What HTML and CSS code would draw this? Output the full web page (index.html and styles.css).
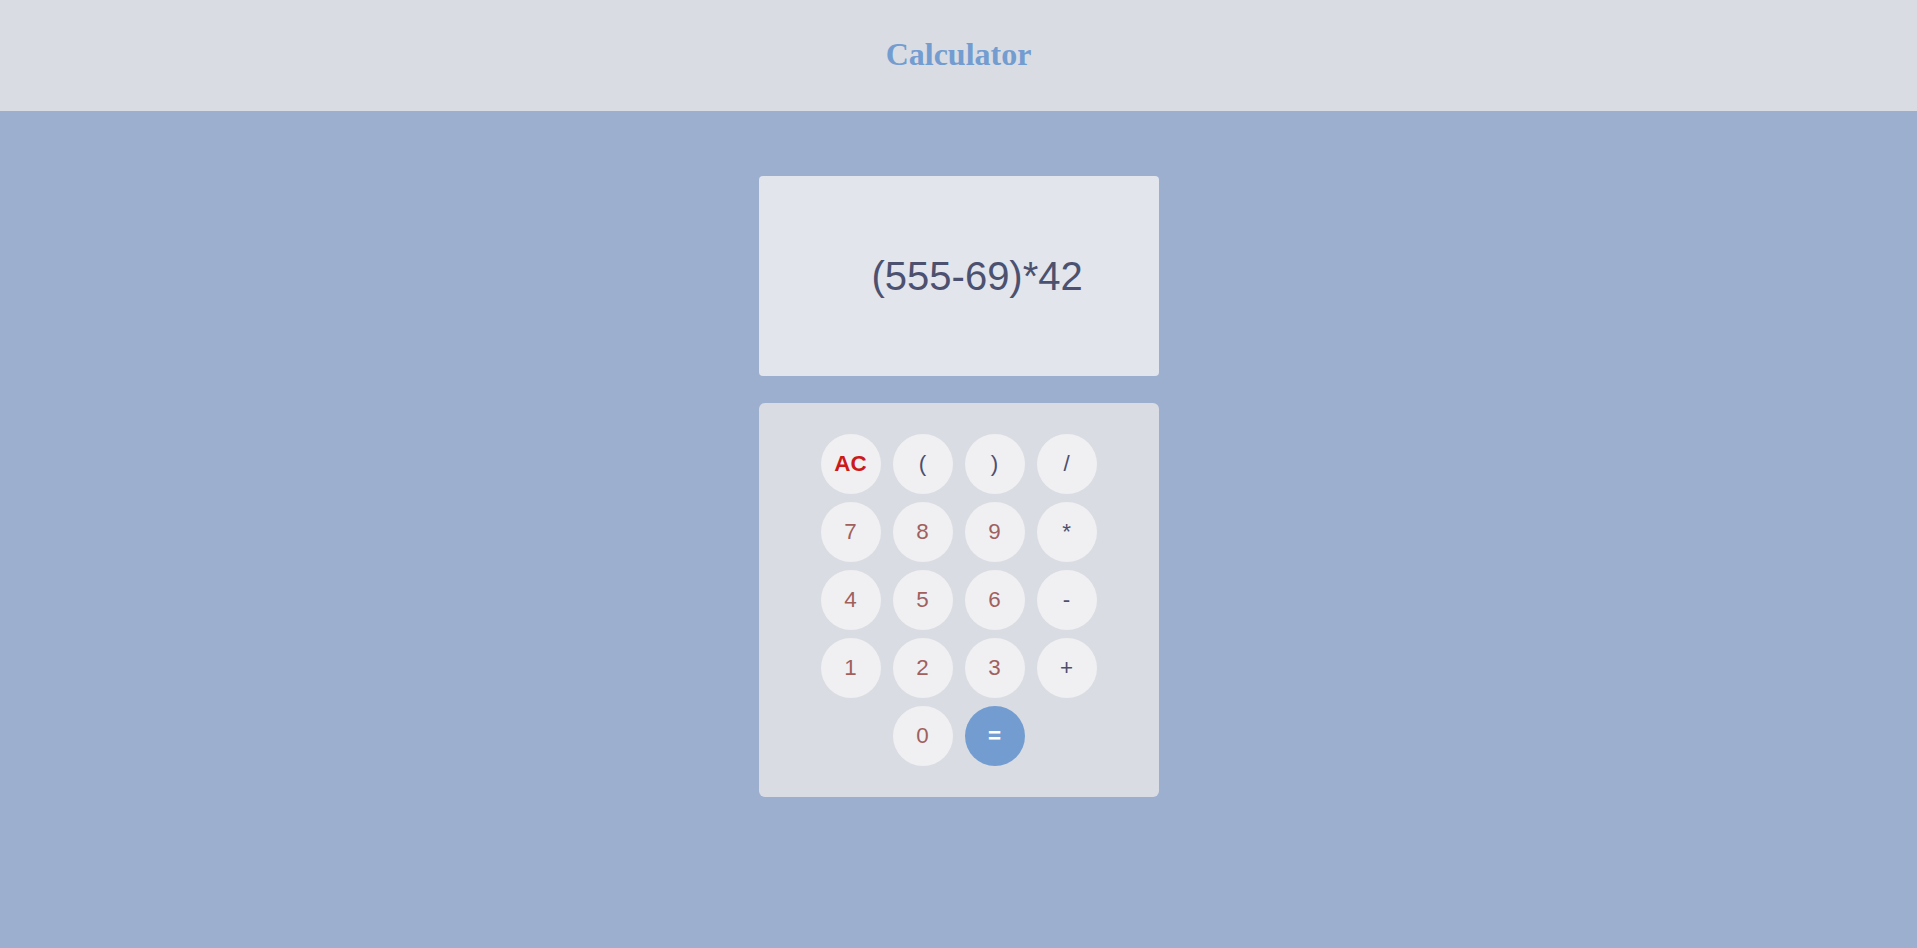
FILE: index.html
```html
<!DOCTYPE html>
<html>
<head>
<meta charset="utf-8">
<title>Calculator</title>
<link rel="stylesheet" href="styles.css">
</head>
<body>
<header class="topbar"><h1 class="title">Calculator</h1></header>
<main class="main">
  <div class="display">(555-69)*42</div>
  <div class="keypad">
    <button class="key key-ac">AC</button>
    <button class="key key-op">(</button>
    <button class="key key-op">)</button>
    <button class="key key-op">/</button>
    <button class="key">7</button>
    <button class="key">8</button>
    <button class="key">9</button>
    <button class="key key-op">*</button>
    <button class="key">4</button>
    <button class="key">5</button>
    <button class="key">6</button>
    <button class="key key-op">-</button>
    <button class="key">1</button>
    <button class="key">2</button>
    <button class="key">3</button>
    <button class="key key-op">+</button>
    <button class="key key-zero">0</button>
    <button class="key key-eq">=</button>
  </div>
</main>
</body>
</html>
```
FILE: styles.css
```css
html, body {
  margin: 0;
  padding: 0;
}
body {
  background: #9cafcf;
  font-family: "Liberation Sans", Arial, sans-serif;
  min-height: 948px;
}
.topbar {
  background: #d9dce3;
  height: 111px;
  display: flex;
  align-items: center;
  justify-content: center;
}
.title {
  margin: 0;
  font-family: "Liberation Serif", "Times New Roman", serif;
  font-weight: bold;
  font-size: 32px;
  color: #739dd0;
  position: relative;
  top: -1px;
}
.main {
  display: flex;
  flex-direction: column;
  align-items: center;
  padding-top: 65px;
  gap: 27px;
}
.display {
  width: 400px;
  height: 200px;
  box-sizing: border-box;
  background: #e2e5ec;
  border-radius: 4px;
  display: flex;
  align-items: center;
  padding-left: 113px;
  font-size: 40px;
  color: #4c5170;
}
.keypad {
  width: 400px;
  box-sizing: border-box;
  background: #d9dce3;
  border-radius: 6px;
  padding: 31px 0 31px;
  display: grid;
  grid-template-columns: repeat(4, 60px);
  column-gap: 12px;
  row-gap: 8px;
  justify-content: center;
}
.key {
  width: 60px;
  height: 60px;
  border: none;
  border-radius: 50%;
  background: #f0f0f2;
  color: #a0605e;
  font-family: "Liberation Sans", Arial, sans-serif;
  font-size: 22.4px;
  padding: 0;
  display: flex;
  align-items: center;
  justify-content: center;
}
.key-op {
  color: #4c4f6e;
}
.key-ac {
  color: #cc1a1a;
  font-weight: bold;
}
.key-zero {
  grid-column: 2;
}
.key-eq {
  background: #739dd0;
  color: #ffffff;
  font-weight: bold;
}
```
